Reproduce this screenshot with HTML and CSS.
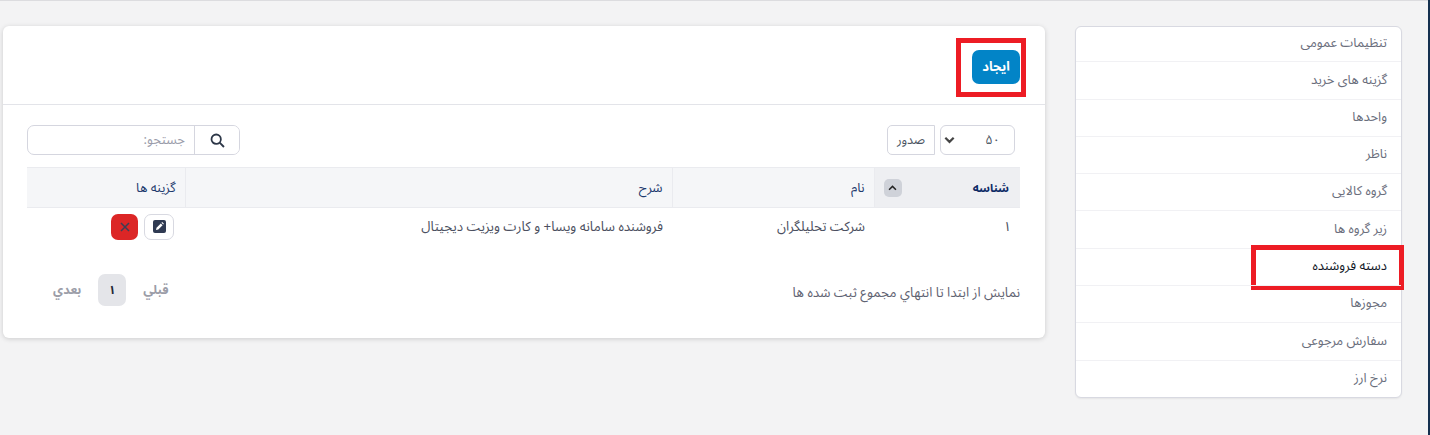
FILE: index.html
```html
<!DOCTYPE html>
<html lang="fa" dir="rtl">
<head>
<meta charset="utf-8">
<title>دسته فروشنده</title>
<link rel="stylesheet" href="styles.css">
</head>
<body>
<div class="page">
  <aside class="side">
    <a class="side-item">تنظیمات عمومی</a>
    <a class="side-item">گزینه های خرید</a>
    <a class="side-item">واحدها</a>
    <a class="side-item">ناظر</a>
    <a class="side-item">گروه کالایی</a>
    <a class="side-item">زیر گروه ها</a>
    <a class="side-item active"><span class="mark mark-side"></span>دسته فروشنده</a>
    <a class="side-item">مجوزها</a>
    <a class="side-item">سفارش مرجوعی</a>
    <a class="side-item">نرخ ارز</a>
  </aside>
  <main class="card">
    <header class="card-head">
      <button class="create"><span class="mark mark-btn"></span>ایجاد</button>
    </header>
    <div class="card-body">
      <div class="tools">
        <div class="len">
          <div class="select"><span>۵۰</span>
            <svg class="chev" viewBox="0 0 10 7" width="11" height="8"><path d="M1.2 1.5 5 5.2l3.8-3.7" fill="none" stroke="#444" stroke-width="2"/></svg>
          </div>
          <div class="len-label">صدور</div>
        </div>
        <div class="search">
          <button class="search-btn"><svg viewBox="0 0 16 16" width="15" height="15"><circle cx="6.6" cy="6.6" r="5" fill="none" stroke="#2d3748" stroke-width="1.9"/><path d="m10.3 10.3 4.6 4.6" stroke="#2d3748" stroke-width="2"/></svg></button>
          <div class="search-input">جستجو:</div>
        </div>
      </div>
      <table class="grid">
        <thead>
          <tr>
            <th class="c-id"><div class="th-flex"><span>شناسه</span><span class="sort"><svg viewBox="0 0 10 7" width="9" height="6"><path d="M1 5.6 5 1.6l4 4" fill="none" stroke="#222" stroke-width="1.7"/></svg></span></div></th>
            <th class="c-name">نام</th>
            <th class="c-desc">شرح</th>
            <th class="c-opt">گزینه ها</th>
          </tr>
        </thead>
        <tbody>
          <tr>
            <td class="id-cell">۱</td>
            <td>شرکت تحلیلگران</td>
            <td>فروشنده سامانه ویسا+ و کارت ویزیت دیجیتال</td>
            <td>
              <div class="actions">
                <button class="act edit"><svg viewBox="0 0 13 13" width="13" height="13"><rect width="13" height="13" rx="2" fill="#2f3a52"/><path d="M3 10l.5-2.3 4.3-4.3 1.8 1.8-4.3 4.3zM8.4 2.8l.8-.7 1.7 1.7-.7.8z" fill="#fff"/></svg></button>
                <button class="act del"><svg viewBox="0 0 10 10" width="10" height="10"><path d="M1 1l8 8M9 1l-8 8" stroke="#3b3f55" stroke-width="1.5"/></svg></button>
              </div>
            </td>
          </tr>
        </tbody>
      </table>
      <div class="foot">
        <div class="info">نمایش از ابتدا تا انتهاي مجموع ثبت شده ها</div>
        <div class="pager">
          <span class="pg">قبلي</span>
          <span class="pg-num">۱</span>
          <span class="pg">بعدي</span>
        </div>
      </div>
    </div>
  </main>
</div>
<div class="edge"></div>
</body>
</html>
```
FILE: styles.css
```css
* { box-sizing: border-box; }
html, body { margin: 0; height: 100%; }
body {
  background: #f3f3f4;
  font-family: "Noto Sans Arabic", "Vazirmatn", "Noto Sans", "DejaVu Sans", sans-serif;
  font-size: 12px;
  color: #3f4254;
  overflow: hidden;
  border-top: 1px solid #dcdcdf;
}
.edge {
  position: fixed;
  top: 0;
  bottom: 0;
  right: 0;
  width: 2px;
  background: #14304f;
}
.page {
  display: flex;
  align-items: flex-start;
  gap: 30px;
  padding: 25px 28px 0 3px;
  width: 1430px;
}
.side {
  width: 327px;
  flex: none;
  height: 372px;
  background: #fff;
  border: 1px solid #d8d9e1;
  border-radius: 6px;
  box-shadow: 0 1px 2px rgba(0,0,0,.06);
  display: grid;
  grid-template-rows: 34px 38px 37px 37px 37px 38px 37px 37px 38px 37px;
}
.side-item {
  position: relative;
  display: flex;
  align-items: center;
  padding: 0 14px 2px;
  color: #6a6e7c;
  font-size: 13px;
  border-top: 1px solid #f1f1f4;
}
.side-item:first-child { border-top: 0; }
.side-item.active { color: #111827; }
.mark {
  position: absolute;
  border: 5px solid #ed1c24;
  pointer-events: none;
}
.mark-side { right: -3px; top: -4px; width: 153px; height: 45px; }
.card {
  width: 1042px;
  flex: none;
  height: 312px;
  background: #fff;
  border-radius: 6px;
  box-shadow: 0 1px 5px rgba(0,0,0,.16);
}
.card-head {
  height: 79px;
  display: flex;
  align-items: flex-start;
  padding: 24px 25px 0;
  border-bottom: 1px solid #e3e4e9;
}
.create {
  position: relative;
  width: 48px;
  height: 34px;
  background: #0284c7;
  color: #fff;
  font: inherit;
  font-size: 13px;
  font-weight: 700;
  border: 0;
  border-radius: 7px;
  padding: 0;
}
.mark-btn { right: -6px; top: -12px; width: 70px; height: 59px; }
.card-body { padding: 20px 25px 0 24px; }
.tools {
  display: flex;
  justify-content: space-between;
  align-items: center;
  height: 30px;
}
.len { display: flex; gap: 5px; margin-right: 5px; }
.select {
  width: 75px;
  height: 30px;
  border: 1px solid #d5d6df;
  border-radius: 6px;
  display: flex;
  align-items: center;
  justify-content: space-between;
  padding: 0 14px 0 3px;
  color: #4b5563;
  font-size: 13px;
}
.len-label {
  width: 48px;
  height: 30px;
  border: 1px solid #d5d6df;
  border-radius: 5px 0 0 5px;
  display: flex;
  align-items: center;
  justify-content: center;
  font-size: 12.5px;
  color: #4b5563;
}
.chev { display: block; }
.search {
  width: 213px;
  height: 30px;
  display: flex;
  border: 1px solid #d5d6df;
  border-radius: 7px;
  overflow: hidden;
}
.search-btn {
  width: 45px;
  flex: none;
  border: 0;
  border-left: 1px solid #d5d6df;
  background: #fff;
  padding: 0;
  display: flex;
  align-items: center;
  justify-content: center;
}
.search-input {
  flex: 1;
  display: flex;
  align-items: center;
  padding: 0 9px;
  color: #9a9caa;
  font-size: 13px;
}
.grid {
  width: 100%;
  margin-top: 12px;
  border-collapse: collapse;
  table-layout: fixed;
}
.grid th {
  height: 40px;
  background: #f5f6f8;
  border: 1px solid #eaebef;
  border-right: 0;
  border-left: 1px solid #eaebef;
  font-weight: 400;
  text-align: right;
  padding: 0 9px;
  color: #1e3a6e;
  font-size: 13px;
}
.grid th:last-child { border-left: 0; }
.grid th.c-id { width: 146px; background: #eeeff2; padding: 0 11px 0 9px; color: #0c2a66; font-weight: 700; font-size: 11.5px; }
.grid th.c-name { width: 202px; }
.grid th.c-desc { width: 487px; }
.th-flex { display: flex; align-items: center; justify-content: space-between; }
.sort {
  width: 18px;
  height: 18px;
  background: #cfd2d9;
  border-radius: 5px;
  display: flex;
  align-items: center;
  justify-content: center;
}
.grid td {
  height: 38px;
  padding: 0 9px;
  vertical-align: middle;
  color: #4b4f60;
  font-size: 13.3px;
}
.grid td.id-cell { padding-right: 9px; }
.actions { display: flex; gap: 6px; margin-right: 2px; }
.act {
  padding: 0;
  display: flex;
  align-items: center;
  justify-content: center;
}
.edit { width: 30px; height: 26px; background: #fff; border: 1px solid #d8d9e1; border-radius: 7px; }
.del { width: 27px; height: 26px; background: #dc2626; border: 0; border-radius: 7px; }
.foot {
  display: flex;
  justify-content: space-between;
  align-items: center;
  margin-top: 28px;
}
.info { color: #5f6372; font-size: 13.3px; padding-top: 5px; }
.pager { display: flex; align-items: center; gap: 17px; padding-left: 26px; }
.pg { color: #9b9da8; font-weight: 700; font-size: 12.5px; }
.pg-num {
  width: 28px;
  height: 32px;
  background: #e4e5e9;
  color: #1f2937;
  font-weight: 700;
  border-radius: 7px;
  display: flex;
  align-items: center;
  justify-content: center;
}
```
